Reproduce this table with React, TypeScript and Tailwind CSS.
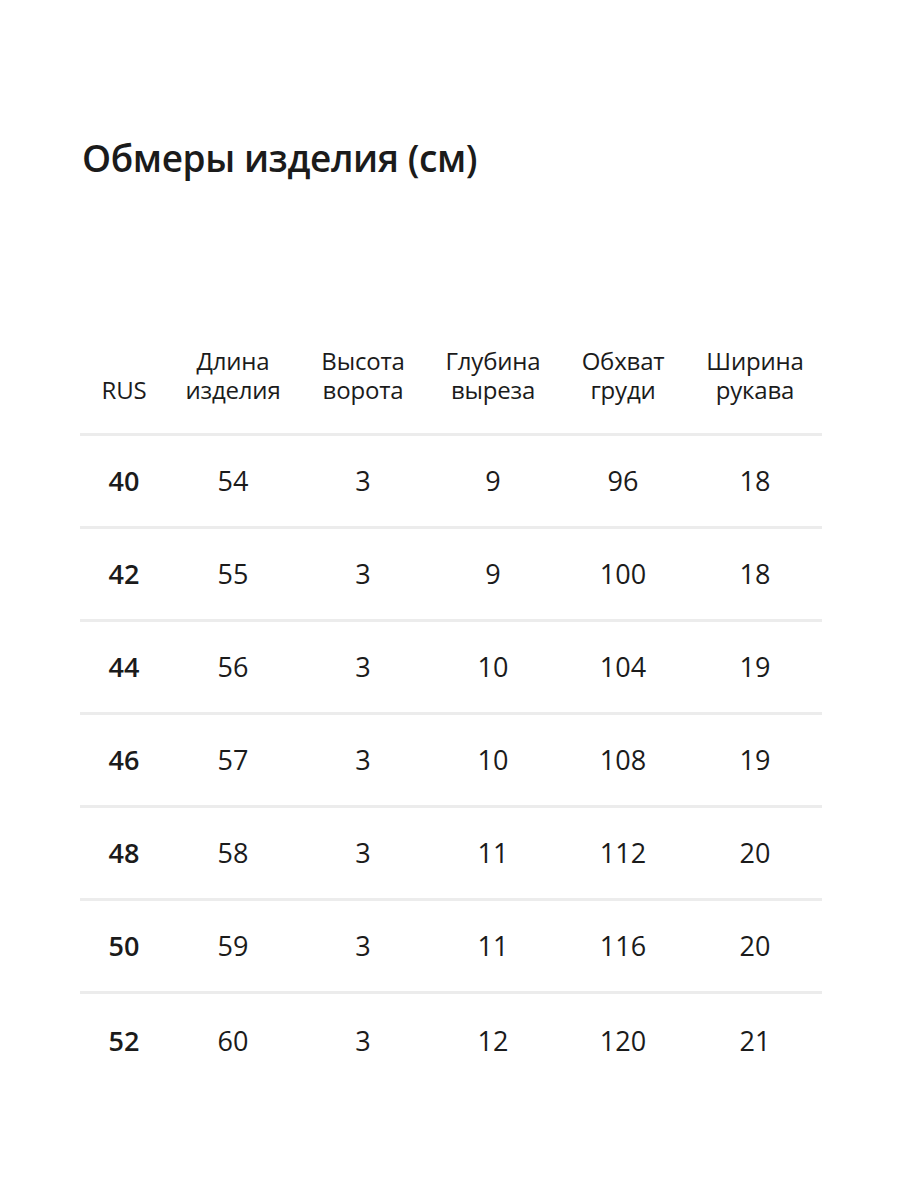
const header = [
  ["RUS"],
  ["Длина", "изделия"],
  ["Высота", "ворота"],
  ["Глубина", "выреза"],
  ["Обхват", "груди"],
  ["Ширина", "рукава"],
];

const rows = [
  ["40", "54", "3", "9", "96", "18"],
  ["42", "55", "3", "9", "100", "18"],
  ["44", "56", "3", "10", "104", "19"],
  ["46", "57", "3", "10", "108", "19"],
  ["48", "58", "3", "11", "112", "20"],
  ["50", "59", "3", "11", "116", "20"],
  ["52", "60", "3", "12", "120", "21"],
];

const cols = "grid grid-cols-[88px_130px_130px_130px_130px_134px]";

export default function App() {
  return (
    <div
      className="min-h-[1200px] w-[900px] bg-white text-[#1b1b1b] pt-[133px] pl-[80px]"
      style={{ fontFamily: '"Open Sans", "Noto Sans", sans-serif' }}
    >
      <h1 className="pl-[2px] text-[37px] font-semibold leading-[50px] tracking-[-0.4px]">
        Обмеры изделия (см)
      </h1>

      <div className="mt-[163px] w-[742px]">
        <div className={`${cols} border-b-[3px] border-[#ececec] pb-[29px]`}>
          {header.map((h, i) => (
            <div
              key={i}
              className="flex flex-col justify-end text-center text-[24px] leading-[29px] tracking-[-0.2px]"
            >
              {h.map((l) => (
                <span key={l}>{l}</span>
              ))}
            </div>
          ))}
        </div>

        {rows.map((r, ri) => (
          <div
            key={ri}
            className={`${cols} h-[93px] items-center ${
              ri < rows.length - 1 ? "border-b-[3px] border-[#ececec]" : ""
            }`}
          >
            {r.map((v, ci) => (
              <div
                key={ci}
                className={`text-center text-[27px] leading-[32px] ${
                  ci === 0 ? "font-semibold" : ""
                }`}
              >
                {v}
              </div>
            ))}
          </div>
        ))}
      </div>
    </div>
  );
}
